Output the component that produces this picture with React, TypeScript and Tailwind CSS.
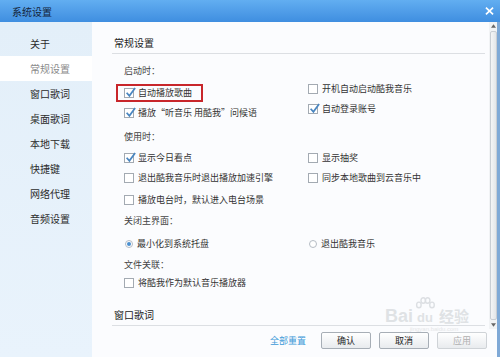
import type { ReactNode } from "react";

const sideItems = ["关于", "常规设置", "窗口歌词", "桌面歌词", "本地下载", "快捷键", "网络代理", "音频设置"];

function Check({ checked }: { checked?: boolean }) {
  return (
    <span className="relative flex h-[10px] w-[10px] shrink-0 border border-[#a3aab2] bg-white">
      {checked && (
        <svg viewBox="0 0 10 10" className="absolute -top-[2px] left-[0px] h-[11px] w-[11px]">
          <path d="M1.5 5.2 L4 8 L9.2 1" fill="none" stroke="#4a86c0" strokeWidth="1.6" />
        </svg>
      )}
    </span>
  );
}

function Radio({ checked }: { checked?: boolean }) {
  return (
    <span className="ml-[1px] flex h-[8px] w-[8px] shrink-0 items-center justify-center rounded-full border border-[#b5bcc4] bg-white">
      {checked && <span className="h-[4px] w-[4px] rounded-full bg-[#4a8fd0]" />}
    </span>
  );
}

function Option({ children, checked, radio }: { children: ReactNode; checked?: boolean; radio?: boolean }) {
  return (
    <div className="flex h-[20px] items-center gap-[4px] whitespace-nowrap text-[9px] text-[#333]">
      {radio ? <Radio checked={checked} /> : <Check checked={checked} />}
      <span>{children}</span>
    </div>
  );
}

function Label({ children, className = "" }: { children: ReactNode; className?: string }) {
  return <div className={`h-[16px] pl-[12px] text-[9px] leading-[16px] text-[#444] ${className}`}>{children}</div>;
}

function SectionHead({ children, className = "" }: { children: ReactNode; className?: string }) {
  return (
    <div className={`h-[21px] border-b border-[#dcdfe3] pl-[2px] text-[10px] leading-[20px] text-[#222] ${className}`}>
      {children}
    </div>
  );
}

function Btn({ children, disabled }: { children: ReactNode; disabled?: boolean }) {
  return (
    <button
      className={`flex h-[17px] w-[50px] items-center justify-center rounded-[2px] border bg-linear-to-b from-white to-[#e8ebee] text-[9px] ${
        disabled ? "border-[#cfd3d7] text-[#b0b0b0]" : "border-[#a7aeb6] text-[#222]"
      }`}
    >
      {children}
    </button>
  );
}

export default function App() {
  return (
    <div className="flex h-[357px] w-[500px] flex-col overflow-hidden bg-white font-['Noto_Sans_CJK_SC',sans-serif]">
      {/* title bar */}
      <div className="flex h-[22px] shrink-0 items-center justify-between bg-linear-to-b from-[#62aef1] to-[#3f8ee0] pl-[12px] pr-[6px]">
        <span className="text-[10px] text-[#14243a]">系统设置</span>
        <svg viewBox="0 0 10 9" className="h-[8px] w-[9px]">
          <path d="M1 0.8 L9 8.2 M9 0.8 L1 8.2" stroke="white" strokeWidth="1.9" />
        </svg>
      </div>

      <div className="flex min-h-0 flex-1">
        {/* sidebar */}
        <aside className="w-[92px] shrink-0 bg-linear-to-b from-[#e3eff9] to-[#e9f3fc] pt-[9px]">
          {sideItems.map((it) => (
            <div
              key={it}
              className={`h-[25px] pl-[30px] text-[10px] leading-[25px] ${
                it === "常规设置" ? "bg-white text-[#8a8a8a]" : "text-[#2b2b2b]"
              }`}
            >
              {it}
            </div>
          ))}
        </aside>

        <main className="relative flex min-w-0 flex-1 flex-col bg-[#fbfcfe]">
          <div className="flex min-h-0 flex-1">
            <div className="flex-1 overflow-hidden pl-[20px] pr-[4px] pt-[11px]">
              <SectionHead>常规设置</SectionHead>

              <Label className="mt-[9px]">启动时：</Label>
              <div className="mt-[4px] grid grid-cols-[184px_1fr] pl-[12px]">
                <div className="relative">
                  <Option checked>自动播放歌曲</Option>
                  <span className="absolute -left-[8px] top-[1px] h-[18px] w-[87px] border-2 border-[#c8262b]" />
                  <Option checked>播放“听音乐 用酷我”问候语</Option>
                </div>
                <div className="-mt-[4px]">
                  <Option>开机自动启动酷我音乐</Option>
                  <Option checked>自动登录账号</Option>
                </div>
              </div>

              <Label className="mt-[6px]">使用时：</Label>
              <div className="mt-[3px] grid grid-cols-[184px_1fr] pl-[12px]">
                <Option checked>显示今日看点</Option>
                <Option>显示抽奖</Option>
                <Option>退出酷我音乐时退出播放加速引擎</Option>
                <Option>同步本地歌曲到云音乐中</Option>
                <div className="mt-[2px]">
                  <Option>播放电台时，默认进入电台场景</Option>
                </div>
              </div>

              <Label className="mt-[3px]">关闭主界面：</Label>
              <div className="mt-[5px] grid grid-cols-[184px_1fr] pl-[12px]">
                <Option radio checked>最小化到系统托盘</Option>
                <Option radio>退出酷我音乐</Option>
              </div>

              <Label className="mt-[3px]">文件关联：</Label>
              <div className="pl-[12px]">
                <Option>将酷我作为默认音乐播放器</Option>
              </div>

              <SectionHead className="mt-[12px]">窗口歌词</SectionHead>
            </div>

            {/* scrollbar */}
            <div className="flex w-[8px] shrink-0 flex-col items-center bg-[#f1f3f5]">
              <svg viewBox="0 0 6 4" className="mt-[2px] h-[4px] w-[5px]">
                <path d="M0 4 L3 0 L6 4 Z" fill="#666" />
              </svg>
              <div className="mb-[3px] mt-[3px] w-[7px] flex-1 rounded-[2px] border border-[#c9ced4] bg-linear-to-r from-[#f4f5f6] to-[#e3e6e9]" />
              <svg viewBox="0 0 6 4" className="mb-[2px] h-[4px] w-[5px]">
                <path d="M0 0 L6 0 L3 4 Z" fill="#666" />
              </svg>
            </div>
          </div>

          {/* footer */}
          <footer className="flex h-[28px] shrink-0 items-start justify-end gap-[8px] pr-[10px] pt-[3px]">
            <span className="mr-[7px] text-[9px] leading-[17px] text-[#3d9ad8]">全部重置</span>
            <Btn>确认</Btn>
            <Btn>取消</Btn>
            <Btn disabled>应用</Btn>
          </footer>

          {/* watermark */}
          <div className="pointer-events-none absolute left-[293px] top-[275px] flex items-end text-[#d9dcdf] opacity-80">
            <span className="font-['Liberation_Sans',sans-serif] text-[18px] font-bold leading-[18px]">Bai</span>
            <span className="relative flex flex-col items-center">
              <svg viewBox="0 0 24 16" className="h-[14px] w-[24px]">
                <ellipse cx="5" cy="9" rx="2.6" ry="3.2" fill="none" stroke="#d5d9dd" strokeWidth="1.6" />
                <ellipse cx="10" cy="4" rx="2.6" ry="3.2" fill="none" stroke="#d5d9dd" strokeWidth="1.6" />
                <ellipse cx="15" cy="4" rx="2.6" ry="3.2" fill="none" stroke="#d5d9dd" strokeWidth="1.6" />
                <ellipse cx="20" cy="9" rx="2.6" ry="3.2" fill="none" stroke="#d5d9dd" strokeWidth="1.6" />
              </svg>
              <span className="font-['Liberation_Sans',sans-serif] text-[13px] font-bold leading-[14px]">du</span>
            </span>
            <span className="ml-[2px] text-[15px] font-bold leading-[18px]">经验</span>
          </div>
          <div className="pointer-events-none absolute left-[318px] top-[304px] font-['Liberation_Sans',sans-serif] text-[6px] leading-[6px] text-[#e4e6e8]">
            jingyan.baidu.com
          </div>
        </main>

        <div className="w-[3px] shrink-0 bg-[#7fa9d6]" />
      </div>
    </div>
  );
}
